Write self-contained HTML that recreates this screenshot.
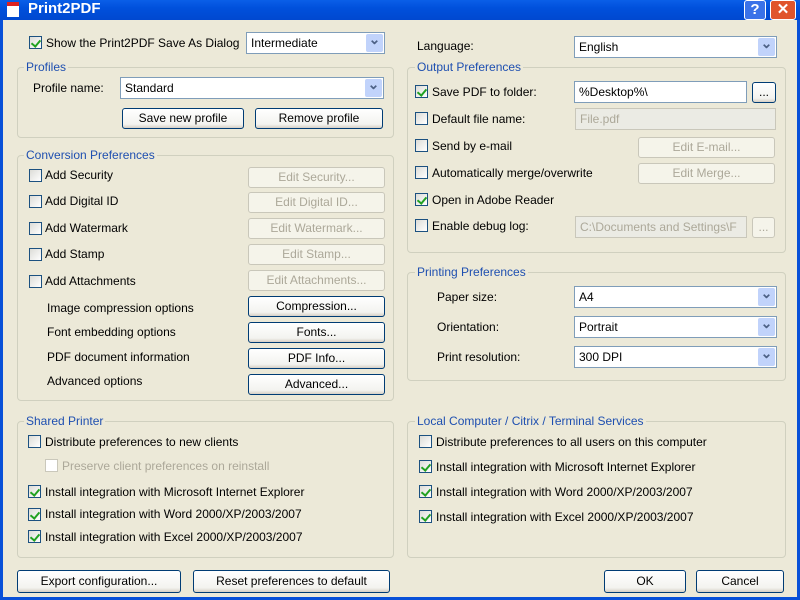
<!DOCTYPE html>
<html><head><meta charset="utf-8">
<style>
*{box-sizing:border-box;margin:0;padding:0}
body{width:800px;height:600px;overflow:hidden;background:#ECE9D8;font-family:"Liberation Sans",sans-serif;font-size:12px;color:#000;position:relative}
.a{position:absolute;white-space:nowrap}
.title{left:0;top:0;width:800px;height:20px;background:linear-gradient(#0A5FE8,#0050DC 40%,#0048D0);}
.title span{position:absolute;left:28px;top:0px;color:#fff;font-weight:bold;font-size:15px}
.ico{left:7px;top:2px;width:12px;height:15px;background:#fff;border-top:4px solid #d22}
.lb{left:0;top:20px;width:3px;height:580px;background:#0850D8}
.rb{right:0;top:20px;width:3px;height:580px;background:#0850D8}
.tb{width:22px;height:20px;border:1px solid #fff;border-radius:3px;color:#fff;font-weight:bold;text-align:center;font-size:15px;line-height:18px;top:0}
.grp{border:1px solid #D0D0BF;border-radius:4px}
.gl{color:#1E4FB0;background:#ECE9D8;padding:0 2px;font-size:12px}
.cb{width:13px;height:13px;border:1px solid #1C5180;background:linear-gradient(135deg,#DCDCD7,#fff)}
.cb.c::after{content:"";position:absolute;left:3px;top:1px;width:4px;height:7px;border:solid #21A121;border-width:0 2px 2px 0;transform:rotate(40deg)}
.cb.d{border-color:#CAC8BB;background:#fff}
.btn{height:21px;border:1px solid #003C74;border-radius:3px;background:linear-gradient(#fff,#F3F3EF 80%,#D6D0C5);text-align:center;line-height:19px}
.btn.d{border-color:#C9C7BA;color:#ACA899;background:#F5F4EA}
.cmb{height:22px;border:1px solid #7F9DB9;background:#fff;padding-left:4px;line-height:20px}
.cmb::after{content:"⌄";position:absolute;right:1px;top:1px;width:17px;height:18px;background:#C1D3FB;border-radius:2px;color:#4D6185;text-align:center;font-size:14px;line-height:10px;font-weight:bold}
.tx{height:22px;border:1px solid #7F9DB9;background:#fff;padding-left:4px;line-height:20px}
.tx.d{background:#EBEBE4;border-color:#C9C7BA;color:#ACA899}
.dis{color:#ACA899}
</style></head><body>
<div class="a title"><span>Print2PDF</span></div>
<div class="a ico"></div>
<div class="a tb" style="left:744px;background:#3A72E8">?</div>
<div class="a tb" style="left:770px;width:26px;background:#E0542C">✕</div>
<div class="a lb"></div><div class="a rb"></div>
<div class="a" style="left:0;top:597px;width:800px;height:3px;background:#0850D8"></div>

<div class="a cb c" style="left:29px;top:36px"></div>
<div class="a" style="left:46px;top:36px">Show the Print2PDF Save As Dialog</div>
<div class="a cmb" style="left:246px;top:32px;width:139px">Intermediate</div>

<div class="a grp" style="left:17px;top:67px;width:377px;height:71px"></div>
<div class="a gl" style="left:24px;top:60px">Profiles</div>
<div class="a" style="left:33px;top:81px">Profile name:</div>
<div class="a cmb" style="left:120px;top:77px;width:264px">Standard</div>
<div class="a btn" style="left:122px;top:108px;width:122px">Save new profile</div>
<div class="a btn" style="left:255px;top:108px;width:128px">Remove profile</div>

<div class="a grp" style="left:17px;top:155px;width:377px;height:246px"></div>
<div class="a gl" style="left:24px;top:148px">Conversion Preferences</div>
<div class="a cb" style="left:29px;top:169px"></div><div class="a" style="left:45px;top:168px">Add Security</div>
<div class="a btn d" style="left:248px;top:167px;width:137px">Edit Security...</div>
<div class="a cb" style="left:29px;top:195px"></div><div class="a" style="left:45px;top:194px">Add Digital ID</div>
<div class="a btn d" style="left:248px;top:192px;width:137px">Edit Digital ID...</div>
<div class="a cb" style="left:29px;top:222px"></div><div class="a" style="left:45px;top:221px">Add Watermark</div>
<div class="a btn d" style="left:248px;top:218px;width:137px">Edit Watermark...</div>
<div class="a cb" style="left:29px;top:248px"></div><div class="a" style="left:45px;top:247px">Add Stamp</div>
<div class="a btn d" style="left:248px;top:244px;width:137px">Edit Stamp...</div>
<div class="a cb" style="left:29px;top:275px"></div><div class="a" style="left:45px;top:274px">Add Attachments</div>
<div class="a btn d" style="left:248px;top:270px;width:137px">Edit Attachments...</div>
<div class="a" style="left:47px;top:301px">Image compression options</div>
<div class="a btn" style="left:248px;top:296px;width:137px">Compression...</div>
<div class="a" style="left:47px;top:325px">Font embedding options</div>
<div class="a btn" style="left:248px;top:322px;width:137px">Fonts...</div>
<div class="a" style="left:47px;top:350px">PDF document information</div>
<div class="a btn" style="left:248px;top:348px;width:137px">PDF Info...</div>
<div class="a" style="left:47px;top:374px">Advanced options</div>
<div class="a btn" style="left:248px;top:374px;width:137px">Advanced...</div>

<div class="a grp" style="left:17px;top:421px;width:377px;height:137px"></div>
<div class="a gl" style="left:24px;top:414px">Shared Printer</div>
<div class="a cb" style="left:28px;top:435px"></div><div class="a" style="left:45px;top:435px">Distribute preferences to new clients</div>
<div class="a cb d" style="left:45px;top:459px"></div><div class="a dis" style="left:62px;top:459px">Preserve client preferences on reinstall</div>
<div class="a cb c" style="left:28px;top:485px"></div><div class="a" style="left:45px;top:485px">Install integration with Microsoft Internet Explorer</div>
<div class="a cb c" style="left:28px;top:508px"></div><div class="a" style="left:45px;top:507px">Install integration with Word 2000/XP/2003/2007</div>
<div class="a cb c" style="left:28px;top:530px"></div><div class="a" style="left:45px;top:530px">Install integration with Excel 2000/XP/2003/2007</div>

<div class="a btn" style="left:17px;top:570px;width:164px;height:23px;line-height:21px">Export configuration...</div>
<div class="a btn" style="left:193px;top:570px;width:197px;height:23px;line-height:21px">Reset preferences to default</div>

<div class="a" style="left:417px;top:39px">Language:</div>
<div class="a cmb" style="left:574px;top:36px;width:203px">English</div>

<div class="a grp" style="left:407px;top:67px;width:379px;height:186px"></div>
<div class="a gl" style="left:415px;top:60px">Output Preferences</div>
<div class="a cb c" style="left:415px;top:85px"></div><div class="a" style="left:432px;top:85px">Save PDF to folder:</div>
<div class="a tx" style="left:574px;top:81px;width:173px">%Desktop%\</div>
<div class="a btn" style="left:752px;top:82px;width:24px">...</div>
<div class="a cb" style="left:415px;top:112px"></div><div class="a" style="left:432px;top:112px">Default file name:</div>
<div class="a tx d" style="left:575px;top:108px;width:201px">File.pdf</div>
<div class="a cb" style="left:415px;top:139px"></div><div class="a" style="left:432px;top:139px">Send by e-mail</div>
<div class="a btn d" style="left:638px;top:137px;width:137px">Edit E-mail...</div>
<div class="a cb" style="left:415px;top:166px"></div><div class="a" style="left:432px;top:166px">Automatically merge/overwrite</div>
<div class="a btn d" style="left:638px;top:163px;width:137px">Edit Merge...</div>
<div class="a cb c" style="left:415px;top:193px"></div><div class="a" style="left:432px;top:193px">Open in Adobe Reader</div>
<div class="a cb" style="left:415px;top:219px"></div><div class="a" style="left:432px;top:219px">Enable debug log:</div>
<div class="a tx d" style="left:575px;top:216px;width:172px;overflow:hidden">C:\Documents and Settings\F</div>
<div class="a btn d" style="left:752px;top:217px;width:23px">...</div>

<div class="a grp" style="left:407px;top:272px;width:379px;height:109px"></div>
<div class="a gl" style="left:415px;top:265px">Printing Preferences</div>
<div class="a" style="left:437px;top:290px">Paper size:</div>
<div class="a cmb" style="left:574px;top:286px;width:203px">A4</div>
<div class="a" style="left:437px;top:320px">Orientation:</div>
<div class="a cmb" style="left:574px;top:316px;width:203px">Portrait</div>
<div class="a" style="left:437px;top:350px">Print resolution:</div>
<div class="a cmb" style="left:574px;top:346px;width:203px">300 DPI</div>

<div class="a grp" style="left:407px;top:421px;width:379px;height:137px"></div>
<div class="a gl" style="left:415px;top:414px">Local Computer / Citrix / Terminal Services</div>
<div class="a cb" style="left:419px;top:435px"></div><div class="a" style="left:436px;top:435px">Distribute preferences to all users on this computer</div>
<div class="a cb c" style="left:419px;top:460px"></div><div class="a" style="left:436px;top:460px">Install integration with Microsoft Internet Explorer</div>
<div class="a cb c" style="left:419px;top:485px"></div><div class="a" style="left:436px;top:485px">Install integration with Word 2000/XP/2003/2007</div>
<div class="a cb c" style="left:419px;top:510px"></div><div class="a" style="left:436px;top:510px">Install integration with Excel 2000/XP/2003/2007</div>

<div class="a btn" style="left:604px;top:570px;width:82px;height:23px;line-height:21px">OK</div>
<div class="a btn" style="left:696px;top:570px;width:88px;height:23px;line-height:21px">Cancel</div>
</body></html>
